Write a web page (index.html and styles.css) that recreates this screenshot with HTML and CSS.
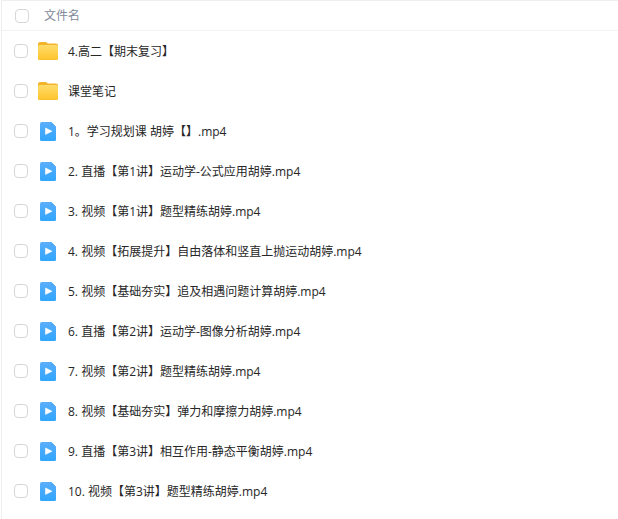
FILE: index.html
```html
<!DOCTYPE html>
<html lang="zh-CN">
<head>
    <meta charset="UTF-8">
    <meta name="viewport" content="width=device-width, initial-scale=1.0">
    <title>文件列表</title>
    <link rel="stylesheet" href="styles.css">
</head>
<body>
<!-- Shared icons -->
<svg class="icon-defs" width="0" height="0" aria-hidden="true">
    <defs>
        <linearGradient id="folderFill" x1="0" y1="0" x2="0" y2="1">
            <stop offset="0" stop-color="#ffdc6b"/>
            <stop offset="1" stop-color="#ffc52e"/>
        </linearGradient>
        <linearGradient id="videoFill" x1="0" y1="0" x2="0" y2="1">
            <stop offset="0" stop-color="#5aaefa"/>
            <stop offset="1" stop-color="#31a5fd"/>
        </linearGradient>
        <symbol id="folder" viewBox="0 0 20 20">
            <path d="M0 2a2 2 0 0 1 2-2h5.500a2 2 0 0 1 1.500.7l.6.700H18a2 2 0 0 1 2 2V8H0z" fill="#f3b32b"/>
            <rect y="3" width="20" height="15" rx="1.500" fill="#f5bd35"/>
            <rect y="3" width="20" height="14.300" rx="1.500" fill="url(#folderFill)"/>
        </symbol>
        <symbol id="video" viewBox="0 0 20 20">
            <path d="M4 0h9.200L18 4.800V17.500a1.500 1.500 0 0 1-1.500 1.500h-13A1.500 1.500 0 0 1 2 17.500V2a2 2 0 0 1 2-2z" fill="url(#videoFill)"/>
            <path d="M13.200 0L18 4.800h-3.300a1.500 1.500 0 0 1-1.500-1.500z" fill="#4fa9f7"/>
            <path d="M7.500 6v6.400l6.500-3.200z" fill="#fff" stroke="#fff" stroke-width=".6" stroke-linejoin="round"/>
        </symbol>
    </defs>
</svg>

<table class="file-list">
    <thead>
        <tr>
            <th class="check"><input type="checkbox" aria-label="全选"></th>
            <th class="title" scope="col">文件名</th>
        </tr>
    </thead>
    <tbody>
        <tr>
            <td class="check"><input type="checkbox" id="file1"></td>
            <td><label class="name" for="file1"><svg class="icon"><use href="#folder"/></svg>4.高二【期末复习】</label></td>
        </tr>
        <tr>
            <td class="check"><input type="checkbox" id="file2"></td>
            <td><label class="name" for="file2"><svg class="icon"><use href="#folder"/></svg>课堂笔记</label></td>
        </tr>
        <tr>
            <td class="check"><input type="checkbox" id="file3"></td>
            <td><label class="name" for="file3"><svg class="icon"><use href="#video"/></svg>1。学习规划课 胡婷【】.mp4</label></td>
        </tr>
        <tr>
            <td class="check"><input type="checkbox" id="file4"></td>
            <td><label class="name" for="file4"><svg class="icon"><use href="#video"/></svg>2. 直播【第1讲】运动学-公式应用胡婷.mp4</label></td>
        </tr>
        <tr>
            <td class="check"><input type="checkbox" id="file5"></td>
            <td><label class="name" for="file5"><svg class="icon"><use href="#video"/></svg>3. 视频【第1讲】题型精练胡婷.mp4</label></td>
        </tr>
        <tr>
            <td class="check"><input type="checkbox" id="file6"></td>
            <td><label class="name" for="file6"><svg class="icon"><use href="#video"/></svg>4. 视频【拓展提升】自由落体和竖直上抛运动胡婷.mp4</label></td>
        </tr>
        <tr>
            <td class="check"><input type="checkbox" id="file7"></td>
            <td><label class="name" for="file7"><svg class="icon"><use href="#video"/></svg>5. 视频【基础夯实】追及相遇问题计算胡婷.mp4</label></td>
        </tr>
        <tr>
            <td class="check"><input type="checkbox" id="file8"></td>
            <td><label class="name" for="file8"><svg class="icon"><use href="#video"/></svg>6. 直播【第2讲】运动学-图像分析胡婷.mp4</label></td>
        </tr>
        <tr>
            <td class="check"><input type="checkbox" id="file9"></td>
            <td><label class="name" for="file9"><svg class="icon"><use href="#video"/></svg>7. 视频【第2讲】题型精练胡婷.mp4</label></td>
        </tr>
        <tr>
            <td class="check"><input type="checkbox" id="file10"></td>
            <td><label class="name" for="file10"><svg class="icon"><use href="#video"/></svg>8. 视频【基础夯实】弹力和摩擦力胡婷.mp4</label></td>
        </tr>
        <tr>
            <td class="check"><input type="checkbox" id="file11"></td>
            <td><label class="name" for="file11"><svg class="icon"><use href="#video"/></svg>9. 直播【第3讲】相互作用-静态平衡胡婷.mp4</label></td>
        </tr>
        <tr>
            <td class="check"><input type="checkbox" id="file12"></td>
            <td><label class="name" for="file12"><svg class="icon"><use href="#video"/></svg>10. 视频【第3讲】题型精练胡婷.mp4</label></td>
        </tr>
    </tbody>
</table>
</body>
</html>
```

FILE: styles.css
```css
body {
    margin: 0;
    padding-left: 1px;
    min-height: 100vh;
    box-sizing: border-box;
    display: flex;
    background-color: #fff;
    color: #262626;
    font-family: "Open Sans", "Noto Sans CJK SC", sans-serif;
    font-size: 12px;
    line-height: 20px;
}

.icon-defs {
    position: absolute;
}

.file-list {
    flex: 1;
    border-collapse: separate;
    border-spacing: 0;
    border-top: 1px solid #eee;
    border-left: 1px solid #eee;
    padding-bottom: 8px;
}

th,
td {
    padding: 0;
    text-align: left;
    vertical-align: middle;
}

th {
    height: 29px;
    border-bottom: 1px solid #f2f2f2;
    color: #818999;
    font-weight: normal;
}

td {
    height: 40px;
}

.check {
    width: 24px;
    padding-left: 12px;
}

th.check {
    width: 23px;
    padding-left: 13px;
}

.title {
    padding-left: 6px;
}

input {
    appearance: none;
    display: block;
    width: 14px;
    height: 14px;
    margin: 0;
    box-sizing: border-box;
    border: 1px solid #d6d6d6;
    border-radius: 4px;
    background-color: #fff;
}

input:checked {
    background-color: #31a5fd;
    border-color: #31a5fd;
}

.name {
    display: flex;
    align-items: center;
    gap: 10px;
    padding-top: 2px;
}

.icon {
    flex: none;
    width: 20px;
    height: 20px;
}
```
